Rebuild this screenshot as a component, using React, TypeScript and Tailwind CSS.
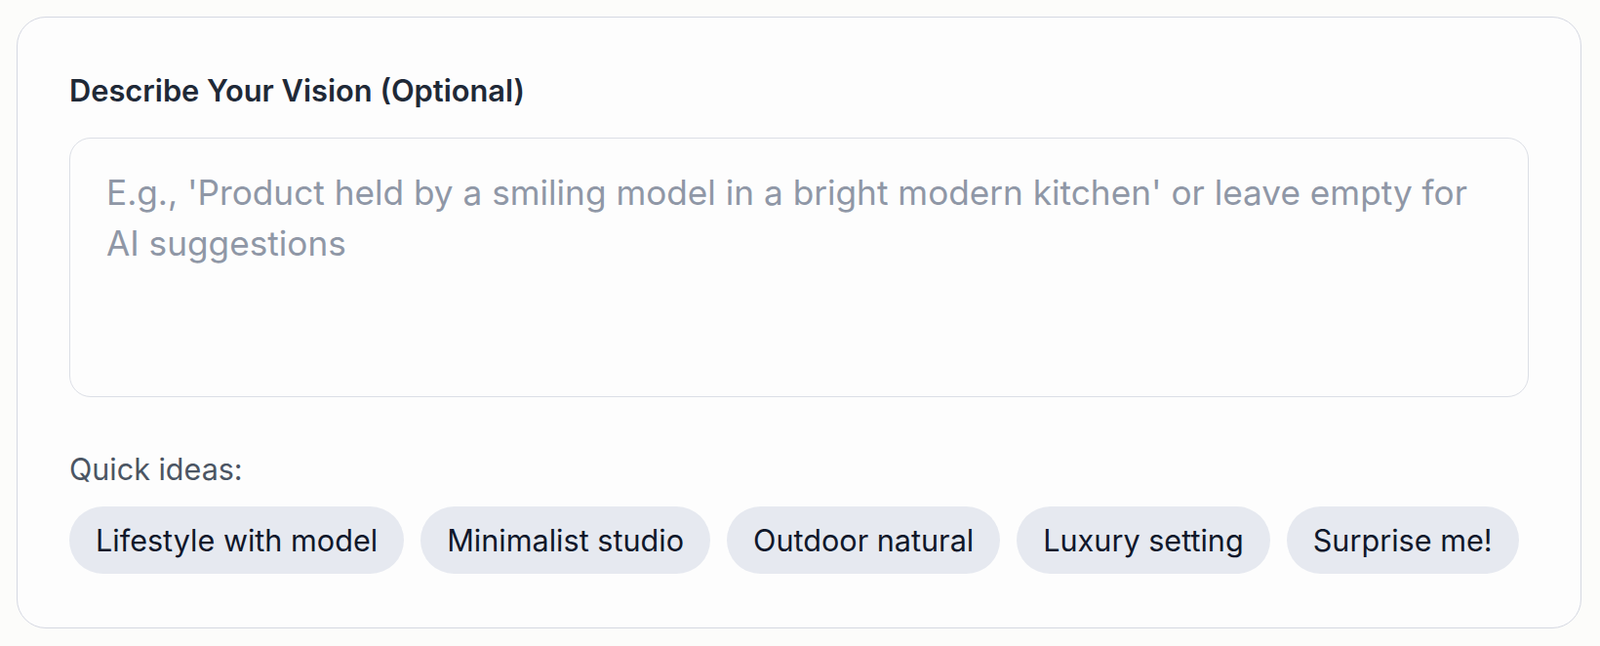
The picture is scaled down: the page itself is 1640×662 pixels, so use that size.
const ideas = ['Lifestyle with model', 'Minimalist studio', 'Outdoor natural', 'Luxury setting', 'Surprise me!'];

export default function App() {
  return (
    <div className="min-h-screen bg-[#fcfcfa] pt-[17px] pl-[17px] pr-[19px] pb-[19px] font-['Inter',sans-serif]">
      <div className="rounded-[30px] border border-[#d5d8e2] bg-[#fdfdfd] px-[53px] pt-[55px] pb-[55px]">
        {/* Label */}
        <h2 className="text-[30.8px] font-semibold leading-[40px] text-[#1f2937]">Describe Your Vision (Optional)</h2>

        {/* Vision input */}
        <textarea
          className="mt-[28px] block h-[266px] w-full resize-none rounded-[22px] border border-[#dcdfe6] bg-transparent px-[37px] pt-[29px] text-[35.2px] leading-[52px] text-[#1f2937] outline-none placeholder:text-[#8f97a6]"
          placeholder="E.g., 'Product held by a smiling model in a bright modern kitchen' or leave empty for AI suggestions"
        />

        {/* Quick ideas */}
        <p className="mt-[56px] text-[30.5px] leading-[36px] text-[#4b5563]">Quick ideas:</p>
        <div className="mt-[20px] flex flex-wrap gap-[17px]">
          {ideas.map((idea) => (
            <button
              key={idea}
              className="h-[69px] rounded-full bg-[#e6e9f0] px-[27px] text-[30.6px] text-[#0f172a]"
            >
              {idea}
            </button>
          ))}
        </div>
      </div>
    </div>
  );
}
